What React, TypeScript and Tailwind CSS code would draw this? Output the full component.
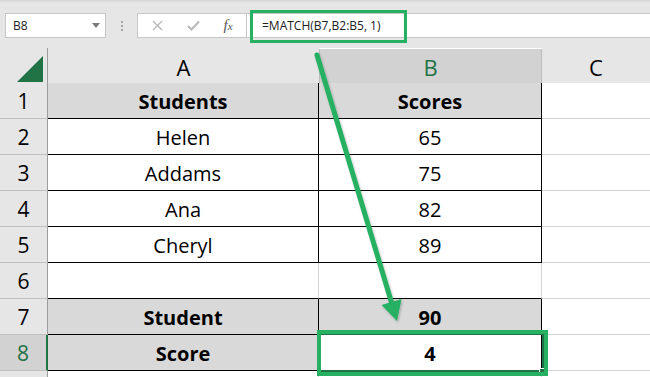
import React from "react";

type Row = {
  n: string;
  a: string;
  b: string;
  fill?: boolean;
  bold?: boolean;
  open?: boolean;
  sel?: boolean;
};

const rows: Row[] = [
  { n: "1", a: "Students", b: "Scores", fill: true, bold: true },
  { n: "2", a: "Helen", b: "65" },
  { n: "3", a: "Addams", b: "75" },
  { n: "4", a: "Ana", b: "82" },
  { n: "5", a: "Cheryl", b: "89" },
  { n: "6", a: "", b: "", open: true },
  { n: "7", a: "Student", b: "90", fill: true, bold: true },
  { n: "8", a: "Score", b: "4", fill: true, bold: true, sel: true },
];

const cellFont = { fontFamily: '"Open Sans", "Noto Sans", sans-serif' };

function FormulaBar() {
  return (
    <div className="relative h-[48px] bg-[#e6e6e6] flex items-start pt-[13px]">
      <div className="absolute left-0 top-0 w-full h-[3px] bg-gradient-to-b from-[#d4d4d4] to-[#e6e6e6]" />
      {/* name box */}
      <div className="ml-[5px] w-[101px] h-[25px] bg-white border border-[#c6c6c6] flex items-center justify-between pl-[7px] pr-[5px]">
        <span className="text-[12px] text-[#222]" style={cellFont}>
          B8
        </span>
        <svg width="8" height="5" viewBox="0 0 8 5">
          <polygon points="0,0 8,0 4,5" fill="#7a7a7a" />
        </svg>
      </div>
      {/* grip dots */}
      <div className="w-[31px] h-[25px] flex flex-col items-center justify-center gap-[2px]">
        <span className="w-[2px] h-[2px] bg-[#a6a6a6]" />
        <span className="w-[2px] h-[2px] bg-[#a6a6a6]" />
        <span className="w-[2px] h-[2px] bg-[#a6a6a6]" />
      </div>
      {/* cancel / enter / function buttons */}
      <div className="w-[110px] h-[25px] bg-white border border-[#c6c6c6] flex items-center">
        <div className="w-[38px] flex justify-center">
          <svg width="11" height="11" viewBox="0 0 11 11">
            <path d="M1 1 L10 10 M10 1 L1 10" stroke="#b8b8b8" strokeWidth="1.4" />
          </svg>
        </div>
        <div className="w-[34px] flex justify-center">
          <svg width="13" height="11" viewBox="0 0 13 11">
            <path d="M1 6 L4.5 9.5 L12 1.5" stroke="#b8b8b8" strokeWidth="2" fill="none" />
          </svg>
        </div>
        <div className="w-[36px] flex justify-center">
          <span
            className="italic text-[15px] text-[#555] leading-none"
            style={{ fontFamily: '"Liberation Serif", serif' }}
          >
            f<span className="text-[11px]">x</span>
          </span>
        </div>
      </div>
      {/* formula input */}
      <div className="flex-1 h-[25px] bg-white border-y border-[#c6c6c6] flex items-center pl-[15px]">
        <span className="text-[12px] text-[#222]" style={cellFont}>
          =MATCH(B7,B2:B5, 1)
        </span>
      </div>
    </div>
  );
}

function HeaderRow() {
  return (
    <div className="grid grid-cols-[48px_271px_223px_1fr] h-[35px]" style={cellFont}>
      <div className="bg-[#e6e6e6] border-r border-b border-[#9c9c9c] flex items-end justify-end pr-[4px] pb-[3px]">
        <svg width="26" height="26" viewBox="0 0 26 26">
          <polygon points="0,26 26,26 26,0" fill="#217346" />
        </svg>
      </div>
      <div className="bg-[#e6e6e6] border-b border-[#9c9c9c] flex items-center justify-center pt-[2px] text-[22px] text-black">
        A
      </div>
      <div className="bg-[#d2d2d2] border-l border-r border-[#bcbcbc] border-b-2 border-b-[#217346] mt-[1px] flex items-center justify-center pt-[2px] text-[22px] text-[#217346]">
        B
      </div>
      <div className="bg-[#e6e6e6] border-b border-[#9c9c9c] flex items-center justify-center pt-[2px] text-[22px] text-black">
        C
      </div>
    </div>
  );
}

function DataRow({ r }: { r: Row }) {
  const vert = r.open ? "border-r-[#d4d4d4]" : "border-r-black";
  const weight = r.bold ? "font-bold" : "font-normal";
  return (
    <div className="grid grid-cols-[48px_271px_223px_1fr] h-[36px]" style={cellFont}>
      <div
        className={
          r.sel
            ? "bg-[#d2d2d2] border-r-2 border-r-[#217346] border-b border-b-[#bfbfbf] flex items-center justify-center pt-[2px] text-[21px] text-[#217346]"
            : "bg-[#e6e6e6] border-r border-r-[#9c9c9c] border-b border-b-[#bfbfbf] flex items-center justify-center pt-[2px] text-[21px] text-black"
        }
      >
        {r.n}
      </div>
      <div
        className={`${r.fill ? "bg-[#d9d9d9]" : "bg-white"} border-r ${vert} border-b border-b-black flex items-center justify-center pt-[3px] text-[20px] text-black ${weight}`}
      >
        {r.a}
      </div>
      <div
        className={`${r.fill && !r.sel ? "bg-[#d9d9d9]" : "bg-white"} border-r ${vert} border-b border-b-black flex items-center justify-center pt-[3px] text-[20px] text-black ${weight}`}
      >
        {r.b}
      </div>
      <div className="bg-white border-b border-b-[#d4d4d4]" />
    </div>
  );
}

function TailRow() {
  return (
    <div className="grid grid-cols-[48px_271px_223px_1fr] h-[12px]">
      <div className="bg-[#e6e6e6] border-r border-r-[#9c9c9c]" />
      <div className="bg-white border-r border-r-[#d4d4d4]" />
      <div className="bg-white border-r border-r-[#d4d4d4]" />
      <div className="bg-white" />
    </div>
  );
}

export default function App() {
  return (
    <div className="relative w-[650px] h-[377px] overflow-hidden bg-white">
      <FormulaBar />
      <HeaderRow />
      {rows.map((r) => (
        <DataRow key={r.n} r={r} />
      ))}
      <TailRow />

      {/* active cell frame and fill handle on B8 */}
      <div className="absolute left-[318px] top-[333px] w-[226px] h-[39px] border-2 border-[#217346]" />
      <div className="absolute left-[539px] top-[368px] w-[6px] h-[6px] bg-[#217346] border border-white" />

      {/* highlight frames */}
      <div className="absolute left-[250px] top-[10px] w-[157px] h-[33px] border-[3px] border-[#25b062]" />
      <div className="absolute left-[317px] top-[330px] w-[231px] h-[46px] border-[4px] border-[#25b062]" />

      {/* pointer arrow from the formula to the result */}
      <svg className="absolute left-0 top-0 pointer-events-none" width="650" height="377" viewBox="0 0 650 377">
        <defs>
          <filter id="arrowShadow" x="-20%" y="-20%" width="140%" height="140%">
            <feDropShadow dx="1" dy="1.5" stdDeviation="1.2" floodColor="#000" floodOpacity="0.25" />
          </filter>
        </defs>
        <g filter="url(#arrowShadow)">
          <line x1="317" y1="55" x2="392" y2="304" stroke="#25b062" strokeWidth="5" strokeLinecap="round" />
          <polygon points="397,321 401.5,299 381.5,305" fill="#25b062" />
        </g>
      </svg>
    </div>
  );
}
